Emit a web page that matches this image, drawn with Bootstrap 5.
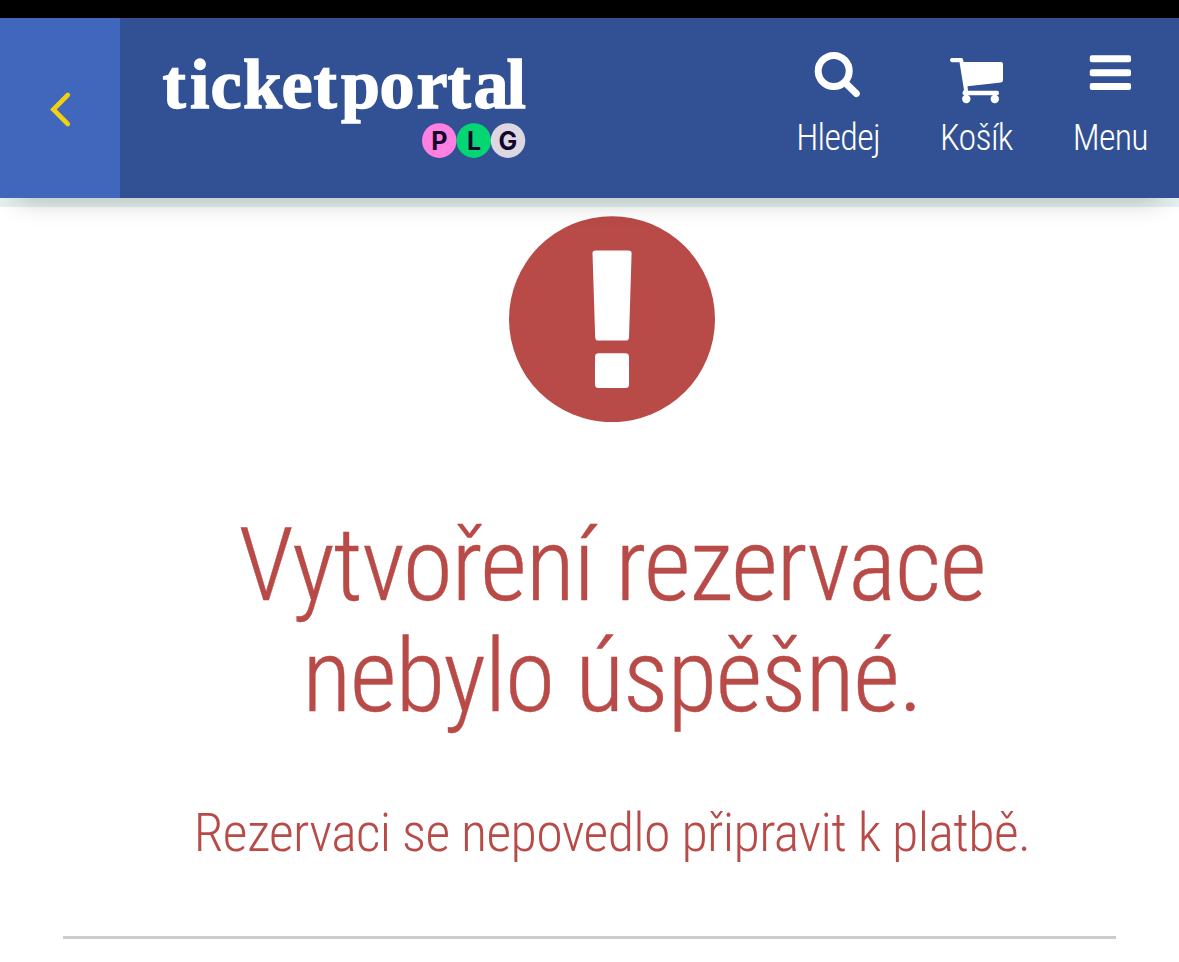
<!DOCTYPE html>
<html lang="cs">
  <head>
    <meta charset="UTF-8" />
    <meta name="viewport" content="width=device-width, initial-scale=1.0" />
    <title>Ticketportal</title>
    <link
      href="https://cdn.jsdelivr.net/npm/bootstrap@5.3.0/dist/css/bootstrap.min.css"
      rel="stylesheet"
    />
    <style>
      body {
        font-family: "Roboto Condensed", Roboto, sans-serif;
        font-stretch: 75%;
        font-weight: 300;
        overflow: hidden;
      }
      .status-strip {
        height: 18px;
        background: #000;
      }
      .site-header {
        height: 180px;
        background: #325194;
        box-shadow: 0 21px 24px -18px rgba(0, 0, 0, 0.22);
      }
      .back-btn {
        width: 120px;
        background: #4167bd;
      }
      .brand-logo {
        margin-left: 30px;
      }
      .nav-actions {
        margin-right: 31px;
        gap: 60px;
        padding-top: 30px;
      }
      .action-label {
        font-size: 36px;
        line-height: 42px;
        letter-spacing: -0.7px;
        margin-top: 13px;
      }
      .under-strip {
        height: 9px;
        background: #e4f0ef;
      }
      .error-box {
        color: #b84a47;
        padding-left: 45px;
      }
      .error-icon {
        margin-top: 9px;
      }
      .error-title {
        font-size: 102px;
        line-height: 111px;
        font-weight: 300;
        letter-spacing: -1.3px;
        margin-top: 88px;
        -webkit-text-stroke: 0.4px #b84a47;
      }
      .error-text {
        font-size: 54px;
        line-height: 64px;
        letter-spacing: -0.65px;
        margin-top: 69px;
      }
      .divider {
        height: 3px;
        margin: 71px 63px 0;
        background: #ccc;
      }
    </style>
  </head>
  <body class="bg-white">
    <div class="status-strip"></div>
    <header class="site-header d-flex position-relative">
      <a href="#" class="back-btn d-block" aria-label="Zpět">
        <svg class="d-block" width="120" height="180" viewBox="0 18 120 180" fill="none">
          <path d="M67.8 95 53.3 109.5 67.8 124" stroke="#f0d010" stroke-width="4.6" stroke-linecap="round" />
        </svg>
      </a>
      <a href="#" class="brand-logo">
        <svg class="d-block" width="390" height="180" viewBox="150 18 390 180">
          <text x="162.5 190 210.5 243 281.5 313.5 341 379.5 416.5 447.5 473.5 506.5" y="107.5" font-family="Liberation Serif" font-weight="700" font-size="70" fill="#fff" stroke="#fff" stroke-width="1.4">ticketportal</text>
          <g font-family="Inter" font-weight="700" font-size="25" text-anchor="middle" fill="#14052f">
            <circle cx="439.3" cy="140.6" r="17.3" fill="#ff80e0" />
            <text x="439.3" y="150">P</text>
            <circle cx="473.8" cy="140.6" r="17.3" fill="#05d573" />
            <text x="474" y="150">L</text>
            <circle cx="508" cy="140.6" r="17.3" fill="#dcd7e1" />
            <text x="508" y="150">G</text>
          </g>
        </svg>
      </a>
      <nav class="nav-actions d-flex ms-auto text-white">
        <a href="#" class="d-flex flex-column align-items-center text-white text-decoration-none">
          <svg width="54" height="56" viewBox="811 48 54 56" fill="none" stroke="#fff">
            <circle cx="833.7" cy="71" r="15.5" stroke-width="7" />
            <path d="M845 82.5 856.3 93.5" stroke-width="7" stroke-linecap="round" />
          </svg>
          <span class="action-label">Hledej</span>
        </a>
        <a href="#" class="d-flex flex-column align-items-center text-white text-decoration-none">
          <svg width="56" height="56" viewBox="948 48 56 56" fill="#fff">
            <path d="M952 58H961.500Q963 58 963.200 60L963.500 62H1001Q1003 62 1003 64V80.500Q1003 82.200 1001 82.500L967.500 86.300 968 90.800H997Q999 90.800 999 93T997 95.200H964Q962.500 95 962.500 93 962.500 91.500 964 90L959.500 62.300H952Q950 62 950 60.100T952 58Z" />
            <circle cx="966.300" cy="99" r="4.200" />
            <circle cx="994.800" cy="99" r="4.200" />
          </svg>
          <span class="action-label">Košík</span>
        </a>
        <a href="#" class="d-flex flex-column align-items-center text-white text-decoration-none">
          <svg width="42" height="56" viewBox="1089 48 42 56" fill="#fff">
            <rect x="1089.800" y="55.300" width="41.200" height="7" rx="2" />
            <rect x="1089.800" y="69.200" width="41.200" height="7" rx="2" />
            <rect x="1089.800" y="83" width="41.200" height="7" rx="2" />
          </svg>
          <span class="action-label">Menu</span>
        </a>
      </nav>
    </header>
    <div class="under-strip"></div>

    <main>
      <div class="error-box text-center">
        <svg class="error-icon d-block mx-auto" width="206" height="206" viewBox="509 216 206 206">
          <circle cx="612" cy="319.200" r="103" fill="#b84a47" />
          <path d="M595.500 250.500H628.500Q631.700 250.500 631.600 253.500L629 337.500Q628.900 340.600 626 340.600H598.300Q595.300 340.600 595.200 337.500L592.500 253.500Q592.400 250.500 595.500 250.500Z" fill="#fff" />
          <rect x="595" y="353.300" width="34" height="34.700" rx="3.500" fill="#fff" />
        </svg>
        <h1 class="error-title mb-0">Vytvoření rezervace<br />nebylo úspěšné.</h1>
        <p class="error-text mb-0">Rezervaci se nepovedlo připravit k platbě.</p>
      </div>
      <div class="divider"></div>
    </main>

    <script src="https://cdn.jsdelivr.net/npm/bootstrap@5.3.0/dist/js/bootstrap.bundle.min.js"></script>
  </body>
</html>
